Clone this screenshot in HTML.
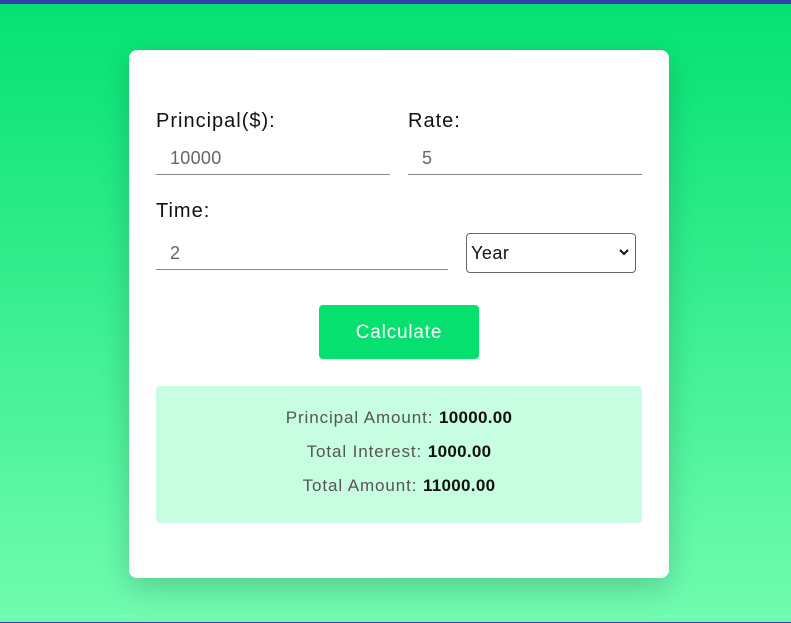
<!DOCTYPE html>
<html><head><style>
*{box-sizing:border-box;margin:0;padding:0}
html,body{width:791px;height:623px;overflow:hidden}
body{font-family:"Liberation Sans",sans-serif;background:linear-gradient(#03e272,#72fcb0);border-top:4px solid #3740a8;border-bottom:1px solid #3740a8;position:relative}
.card{position:absolute;left:129px;top:46px;width:540px;height:528px;background:#fff;border-radius:8px;box-shadow:0 10px 30px rgba(0,0,0,.18)}
.lbl{position:absolute;font-size:20px;color:#111;letter-spacing:1px}
.inp{position:absolute;border-bottom:1.5px solid #888;font-size:18px;color:#666;padding-left:14px;height:30px;line-height:26px;letter-spacing:.3px}
.sel{position:absolute;left:337px;top:183px;width:170px;height:40px;border:1px solid #666;border-radius:4px;font-size:18px;color:#111;padding-left:4px;line-height:38px;letter-spacing:.5px}
.sel svg{position:absolute;right:6px;top:14px}
.btn{position:absolute;left:190px;top:255px;width:160px;height:54px;background:#05e06f;border-radius:4px;color:#fff;font-size:19px;text-align:center;line-height:56px;letter-spacing:.8px}
.res{position:absolute;left:27px;top:336px;width:486px;height:137px;background:#c7fde0;border-radius:4px;text-align:center;font-size:17px;color:#555;padding-top:22px;letter-spacing:.9px}
.res div{height:34px}
.res b{color:#111;font-weight:bold;letter-spacing:.3px}
</style></head><body>
<div class="card">
<div class="lbl" style="left:27px;top:60px">Principal($):</div>
<div class="lbl" style="left:279px;top:60px">Rate:</div>
<div class="inp" style="left:27px;top:95px;width:234px">10000</div>
<div class="inp" style="left:279px;top:95px;width:234px">5</div>
<div class="lbl" style="left:27px;top:150px">Time:</div>
<div class="inp" style="left:27px;top:190px;width:292px">2</div>
<div class="sel">Year<svg width="10" height="8" viewBox="0 0 10 8"><path d="M1 2l4 4 4-4" stroke="#111" stroke-width="2" fill="none"/></svg></div>
<div class="btn">Calculate</div>
<div class="res">
<div>Principal Amount: <b>10000.00</b></div>
<div>Total Interest: <b>1000.00</b></div>
<div>Total Amount: <b>11000.00</b></div>
</div>
</div>
</body></html>
